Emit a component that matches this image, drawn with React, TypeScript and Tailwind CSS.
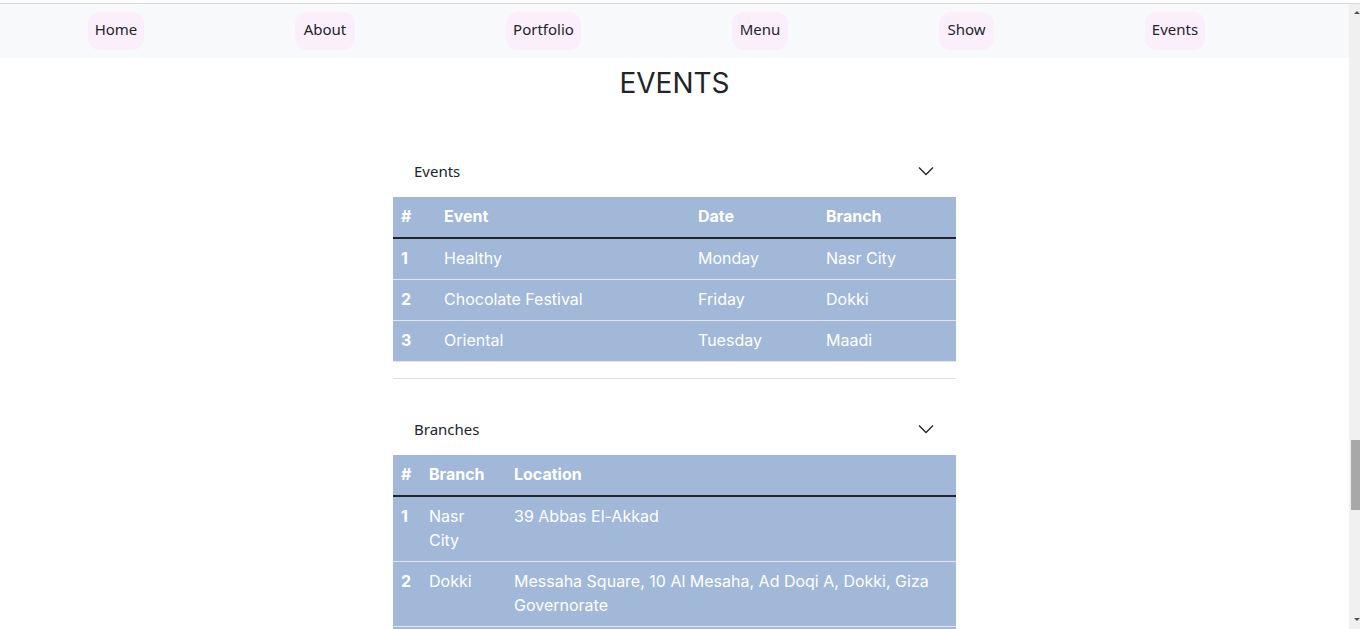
import React from "react";

const navItems: { label: string; w: string }[] = [
  { label: "Home", w: "w-[56px]" },
  { label: "About", w: "w-[60px]" },
  { label: "Portfolio", w: "w-[75px]" },
  { label: "Menu", w: "w-[56px]" },
  { label: "Show", w: "w-[55px]" },
  { label: "Events", w: "w-[60px]" },
];

const events = [
  ["1", "Healthy", "Monday", "Nasr City"],
  ["2", "Chocolate Festival", "Friday", "Dokki"],
  ["3", "Oriental", "Tuesday", "Maadi"],
];

function Chevron() {
  return (
    <svg width="16" height="16" viewBox="0 0 16 16" fill="none">
      <path d="M1 4.5 L8 11.5 L15 4.5" stroke="#212529" strokeWidth="1.3" strokeLinejoin="miter" />
    </svg>
  );
}

function AccHeader({ title }: { title: string }) {
  return (
    <div className="h-[56px] flex items-center justify-between pl-[21px] pr-[22px] pt-[3px] font-['Noto_Sans',sans-serif] text-[15px] text-[#212529]">
      <span className="pt-[1px]">{title}</span>
      <Chevron />
    </div>
  );
}

export default function App() {
  const cell = "px-2 pt-[7px] pb-[9px] leading-6 text-[16px] align-top";
  return (
    <div className="h-[629px] w-[1360px] overflow-hidden bg-white flex flex-col">
      <div className="h-[3px] bg-white shrink-0" />
      <div className="h-px bg-[#dadada] shrink-0" />
      <div className="flex flex-1 min-h-0">
        <div className="w-[1349px] flex flex-col shrink-0">
          <nav className="h-[54px] shrink-0 bg-[#f8f9fa] flex items-center pl-[88px] gap-[151px] font-['Noto_Sans',sans-serif] text-[15px] text-[#212529]">
            {navItems.map((n) => (
              <div
                key={n.label}
                className={`${n.w} h-[38px] rounded-[12px] bg-[#fbeffb] flex items-center justify-center pb-[4px]`}
              >
                {n.label}
              </div>
            ))}
          </nav>
          <h1 className="mt-[7px] text-center text-[28px] leading-[36px] font-normal text-[#212529] font-['Inter',sans-serif]">
            EVENTS
          </h1>
          <div className="ml-[393px] w-[563px] mt-[40px] font-['Inter',sans-serif]">
            <div className="border-b border-[#dee2e6] pb-[16px]">
              <AccHeader title="Events" />
              <table className="w-full table-fixed border-collapse bg-[#a1b8d8] text-white">
                <colgroup>
                  <col className="w-[43px]" />
                  <col className="w-[254px]" />
                  <col className="w-[128px]" />
                  <col />
                </colgroup>
                <thead>
                  <tr className="border-b-2 border-[#212529]">
                    <th className={`${cell} text-left font-bold`}>#</th>
                    <th className={`${cell} text-left font-bold`}>Event</th>
                    <th className={`${cell} text-left font-bold`}>Date</th>
                    <th className={`${cell} text-left font-bold`}>Branch</th>
                  </tr>
                </thead>
                <tbody>
                  {events.map((r) => (
                    <tr key={r[0]} className="border-b border-[#e3e8f0]">
                      <th className={`${cell} text-left font-bold`}>{r[0]}</th>
                      <td className={cell}>{r[1]}</td>
                      <td className={cell}>{r[2]}</td>
                      <td className={cell}>{r[3]}</td>
                    </tr>
                  ))}
                </tbody>
              </table>
            </div>
            <div className="mt-[20px]">
              <AccHeader title="Branches" />
              <table className="w-full table-fixed border-collapse bg-[#a1b8d8] text-white">
                <colgroup>
                  <col className="w-[28px]" />
                  <col className="w-[85px]" />
                  <col />
                </colgroup>
                <thead>
                  <tr className="border-b-2 border-[#212529]">
                    <th className={`${cell} text-left font-bold`}>#</th>
                    <th className={`${cell} text-left font-bold`}>Branch</th>
                    <th className={`${cell} text-left font-bold`}>Location</th>
                  </tr>
                </thead>
                <tbody>
                  <tr className="border-b border-[#e3e8f0]">
                    <th className={`${cell} text-left font-bold`}>1</th>
                    <td className={cell}>
                      Nasr
                      <br />
                      City
                    </td>
                    <td className={cell}>39 Abbas El-Akkad</td>
                  </tr>
                  <tr className="border-b border-[#e3e8f0]">
                    <th className={`${cell} text-left font-bold`}>2</th>
                    <td className={cell}>Dokki</td>
                    <td className={cell}>
                      Messaha Square, 10 Al Mesaha, Ad Doqi A, Dokki, Giza
                      <br />
                      Governorate
                    </td>
                  </tr>
                  <tr>
                    <td className="h-[40px]" colSpan={3} />
                  </tr>
                </tbody>
              </table>
            </div>
          </div>
        </div>
        <div className="w-[11px] shrink-0 bg-[#f0f0f0] relative">
          <div className="absolute left-[5px] top-[7px] w-0 h-0 border-l-[3px] border-r-[3px] border-b-[3px] border-l-transparent border-r-transparent border-b-[#505050]" />
          <div className="absolute left-[2px] right-0 top-[436px] h-[70px] bg-[#a8a8a8]" />
          <div className="absolute left-[5px] bottom-[8px] w-0 h-0 border-l-[3px] border-r-[3px] border-t-[3px] border-l-transparent border-r-transparent border-t-[#505050]" />
        </div>
      </div>
    </div>
  );
}
